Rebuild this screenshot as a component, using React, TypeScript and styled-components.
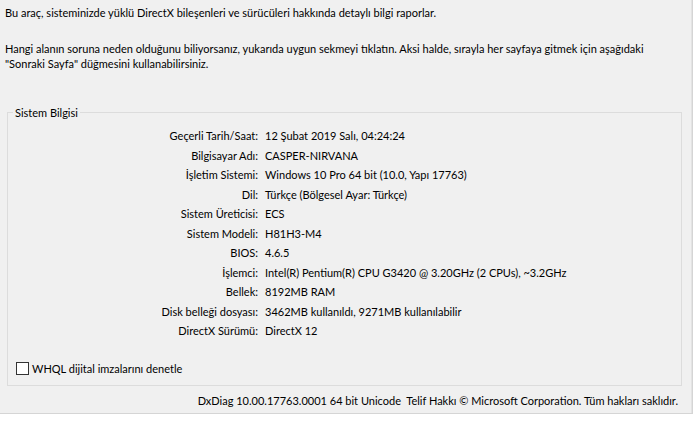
import React from "react";
import styled, { createGlobalStyle } from "styled-components";

const GlobalStyle = createGlobalStyle`
  body {
    margin: 0;
    background: #ffffff;
    font-family: Lato, "Open Sans", sans-serif;
    font-size: 11px;
    color: #000;
  }
`;

const TabPage = styled.div`
  box-sizing: border-box;
  width: 693px;
  height: 414px;
  background: #f0f0f0;
  border-right: 1px solid #d5d5d5;
  border-bottom: 1px solid #d5d5d5;
  box-shadow: inset -3px 0 0 -2px #e3e3e3;
  padding: 5px 0 0 5px;
  display: flex;
  flex-direction: column;
`;

const Intro = styled.p<{ $gap?: number }>`
  margin: ${p => p.$gap ?? 0}px 0 0;
  line-height: 15px;
  white-space: nowrap;
`;

const Group = styled.fieldset`
  box-sizing: border-box;
  width: 675px;
  margin: 34px 0 0 2px;
  padding: 6px 0 10px 0;
  border: 1px solid #dcdcdc;
  min-width: 0;
`;

const Legend = styled.legend`
  margin-left: 5px;
  padding: 0 2px;
  line-height: 15px;
`;

const InfoGrid = styled.div`
  display: grid;
  grid-template-columns: 250px 1fr;
  grid-auto-rows: 19.5px;
  column-gap: 7px;
  align-items: center;
`;

const Label = styled.div`
  text-align: right;
  white-space: nowrap;
`;

const Value = styled.div`
  white-space: nowrap;
`;

const CheckRow = styled.label`
  display: flex;
  align-items: center;
  gap: 3px;
  margin: 21px 0 0 8px;
  height: 13px;
  line-height: 15px;
`;

const Box = styled.span`
  box-sizing: border-box;
  width: 13px;
  height: 13px;
  border: 1px solid #333;
  background: #fff;
`;

const Footer = styled.div`
  margin-top: 7px;
  padding-right: 14px;
  text-align: right;
  line-height: 15px;
  white-space: nowrap;
`;

const rows: [string, string][] = [
  ["Geçerli Tarih/Saat:", "12 Şubat 2019 Salı, 04:24:24"],
  ["Bilgisayar Adı:", "CASPER-NIRVANA"],
  ["İşletim Sistemi:", "Windows 10 Pro 64 bit (10.0, Yapı 17763)"],
  ["Dil:", "Türkçe (Bölgesel Ayar: Türkçe)"],
  ["Sistem Üreticisi:", "ECS"],
  ["Sistem Modeli:", "H81H3-M4"],
  ["BIOS:", "4.6.5"],
  ["İşlemci:", "Intel(R) Pentium(R) CPU G3420 @ 3.20GHz (2 CPUs), ~3.2GHz"],
  ["Bellek:", "8192MB RAM"],
  ["Disk belleği dosyası:", "3462MB kullanıldı, 9271MB kullanılabilir"],
  ["DirectX Sürümü:", "DirectX 12"],
];

const App = () => {
  return (
    <>
      <GlobalStyle />
      <TabPage>
        <Intro>
          Bu araç, sisteminizde yüklü DirectX bileşenleri ve sürücüleri hakkında detaylı bilgi raporlar.
        </Intro>
        <Intro $gap={21}>
          Hangi alanın soruna neden olduğunu biliyorsanız, yukarıda uygun sekmeyi tıklatın. Aksi halde, sırayla her sayfaya gitmek için aşağıdaki
          <br />
          "Sonraki Sayfa" düğmesini kullanabilirsiniz.
        </Intro>
        <Group>
          <Legend>Sistem Bilgisi</Legend>
          <InfoGrid>
            {rows.map(([label, value]) => (
              <React.Fragment key={label}>
                <Label>{label}</Label>
                <Value>{value}</Value>
              </React.Fragment>
            ))}
          </InfoGrid>
          <CheckRow>
            <Box />
            WHQL dijital imzalarını denetle
          </CheckRow>
        </Group>
        <Footer>
          DxDiag 10.00.17763.0001 64 bit Unicode&nbsp; Telif Hakkı © Microsoft Corporation. Tüm hakları saklıdır.
        </Footer>
      </TabPage>
    </>
  );
};

export default App;
